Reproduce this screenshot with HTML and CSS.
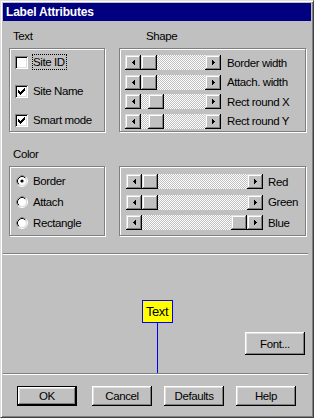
FILE: index.html
```html
<!DOCTYPE html>
<html>
<head>
  <title>Label Attributes</title>
  <link rel="stylesheet" href="styles.css">
</head>
<body>
  <div class="dialog">
    <div class="titlebar">Label Attributes</div>

    <div class="groups">
      <!-- Text options -->
      <div class="group">
        <div class="caption">Text</div>
        <div class="frame checks">
          <div class="check">
            <span class="box"></span>
            <span class="focus">Site ID</span>
          </div>
          <div class="check">
            <span class="box"><svg width="13" height="13" viewBox="0 0 13 13"><path d="M3 5H4V6H5V7H6V6H7V5H8V4H9V3H10V6H9V7H8V8H7V9H6V10H5V9H4V8H3Z" fill="#000" shape-rendering="crispEdges"/></svg></span>
            <span>Site Name</span>
          </div>
          <div class="check">
            <span class="box"><svg width="13" height="13" viewBox="0 0 13 13"><path d="M3 5H4V6H5V7H6V6H7V5H8V4H9V3H10V6H9V7H8V8H7V9H6V10H5V9H4V8H3Z" fill="#000" shape-rendering="crispEdges"/></svg></span>
            <span>Smart mode</span>
          </div>
        </div>
      </div>

      <!-- Shape sliders -->
      <div class="group">
        <div class="caption indent">Shape</div>
        <div class="frame sliders shape">
          <div class="slider">
            <div class="scroll">
              <span class="arrow"><svg width="3" height="5" viewBox="0 0 3 5"><path d="M0 2h1v1H0zM1 1h1v3H1zM2 0h1v5H2z" shape-rendering="crispEdges"/></svg></span>
              <span class="track"><span class="thumb" style="margin-left:0px"></span></span>
              <span class="arrow"><svg width="3" height="5" viewBox="0 0 3 5"><path d="M0 0h1v5H0zM1 1h1v3H1zM2 2h1v1H2z" shape-rendering="crispEdges"/></svg></span>
            </div>
            <span>Border width</span>
          </div>
          <div class="slider">
            <div class="scroll">
              <span class="arrow"><svg width="3" height="5" viewBox="0 0 3 5"><path d="M0 2h1v1H0zM1 1h1v3H1zM2 0h1v5H2z" shape-rendering="crispEdges"/></svg></span>
              <span class="track"><span class="thumb" style="margin-left:0px"></span></span>
              <span class="arrow"><svg width="3" height="5" viewBox="0 0 3 5"><path d="M0 0h1v5H0zM1 1h1v3H1zM2 2h1v1H2z" shape-rendering="crispEdges"/></svg></span>
            </div>
            <span>Attach. width</span>
          </div>
          <div class="slider">
            <div class="scroll">
              <span class="arrow"><svg width="3" height="5" viewBox="0 0 3 5"><path d="M0 2h1v1H0zM1 1h1v3H1zM2 0h1v5H2z" shape-rendering="crispEdges"/></svg></span>
              <span class="track"><span class="thumb" style="margin-left:7px"></span></span>
              <span class="arrow"><svg width="3" height="5" viewBox="0 0 3 5"><path d="M0 0h1v5H0zM1 1h1v3H1zM2 2h1v1H2z" shape-rendering="crispEdges"/></svg></span>
            </div>
            <span>Rect round X</span>
          </div>
          <div class="slider">
            <div class="scroll">
              <span class="arrow"><svg width="3" height="5" viewBox="0 0 3 5"><path d="M0 2h1v1H0zM1 1h1v3H1zM2 0h1v5H2z" shape-rendering="crispEdges"/></svg></span>
              <span class="track"><span class="thumb" style="margin-left:7px"></span></span>
              <span class="arrow"><svg width="3" height="5" viewBox="0 0 3 5"><path d="M0 0h1v5H0zM1 1h1v3H1zM2 2h1v1H2z" shape-rendering="crispEdges"/></svg></span>
            </div>
            <span>Rect round Y</span>
          </div>
        </div>
      </div>

      <!-- Color target -->
      <div class="group">
        <div class="caption">Color</div>
        <div class="frame radios">
          <div class="radio">
            <svg width="12" height="12" viewBox="0 0 12 12">
              <circle cx="6" cy="6" r="5.5" fill="none" stroke="#fff"/>
              <path d="M2.11 9.89A5.5 5.5 0 0 1 9.89 2.11" fill="none" stroke="#808080"/>
              <circle cx="6" cy="6" r="4.5" fill="#fff" stroke="#dfdfdf"/>
              <path d="M2.82 9.18A4.5 4.5 0 0 1 9.18 2.82" fill="none" stroke="#000"/>
              <circle cx="6" cy="6" r="1.6" fill="#000"/>
            </svg>
            <span>Border</span>
          </div>
          <div class="radio">
            <svg width="12" height="12" viewBox="0 0 12 12">
              <circle cx="6" cy="6" r="5.5" fill="none" stroke="#fff"/>
              <path d="M2.11 9.89A5.5 5.5 0 0 1 9.89 2.11" fill="none" stroke="#808080"/>
              <circle cx="6" cy="6" r="4.5" fill="#fff" stroke="#dfdfdf"/>
              <path d="M2.82 9.18A4.5 4.5 0 0 1 9.18 2.82" fill="none" stroke="#000"/>
            </svg>
            <span>Attach</span>
          </div>
          <div class="radio">
            <svg width="12" height="12" viewBox="0 0 12 12">
              <circle cx="6" cy="6" r="5.5" fill="none" stroke="#fff"/>
              <path d="M2.11 9.89A5.5 5.5 0 0 1 9.89 2.11" fill="none" stroke="#808080"/>
              <circle cx="6" cy="6" r="4.5" fill="#fff" stroke="#dfdfdf"/>
              <path d="M2.82 9.18A4.5 4.5 0 0 1 9.18 2.82" fill="none" stroke="#000"/>
            </svg>
            <span>Rectangle</span>
          </div>
        </div>
      </div>

      <!-- RGB sliders -->
      <div class="group">
        <div class="caption">&nbsp;</div>
        <div class="frame sliders colors">
          <div class="slider">
            <div class="scroll">
              <span class="arrow"><svg width="3" height="5" viewBox="0 0 3 5"><path d="M0 2h1v1H0zM1 1h1v3H1zM2 0h1v5H2z" shape-rendering="crispEdges"/></svg></span>
              <span class="track"><span class="thumb" style="margin-left:0px"></span></span>
              <span class="arrow"><svg width="3" height="5" viewBox="0 0 3 5"><path d="M0 0h1v5H0zM1 1h1v3H1zM2 2h1v1H2z" shape-rendering="crispEdges"/></svg></span>
            </div>
            <span>Red</span>
          </div>
          <div class="slider">
            <div class="scroll">
              <span class="arrow"><svg width="3" height="5" viewBox="0 0 3 5"><path d="M0 2h1v1H0zM1 1h1v3H1zM2 0h1v5H2z" shape-rendering="crispEdges"/></svg></span>
              <span class="track"><span class="thumb" style="margin-left:0px"></span></span>
              <span class="arrow"><svg width="3" height="5" viewBox="0 0 3 5"><path d="M0 0h1v5H0zM1 1h1v3H1zM2 2h1v1H2z" shape-rendering="crispEdges"/></svg></span>
            </div>
            <span>Green</span>
          </div>
          <div class="slider">
            <div class="scroll">
              <span class="arrow"><svg width="3" height="5" viewBox="0 0 3 5"><path d="M0 2h1v1H0zM1 1h1v3H1zM2 0h1v5H2z" shape-rendering="crispEdges"/></svg></span>
              <span class="track"><span class="thumb" style="margin-left:89px"></span></span>
              <span class="arrow"><svg width="3" height="5" viewBox="0 0 3 5"><path d="M0 0h1v5H0zM1 1h1v3H1zM2 2h1v1H2z" shape-rendering="crispEdges"/></svg></span>
            </div>
            <span>Blue</span>
          </div>
        </div>
      </div>
    </div>

    <div class="separator first"></div>

    <!-- Preview of the label -->
    <div class="preview">
      <div class="tag-column">
        <div class="tag">Text</div>
        <div class="leader"></div>
      </div>
      <button class="btn font-btn">Font...</button>
    </div>

    <div class="separator"></div>

    <div class="buttons">
      <button class="btn default">OK</button>
      <button class="btn">Cancel</button>
      <button class="btn">Defaults</button>
      <button class="btn">Help</button>
    </div>
  </div>
</body>
</html>
```

FILE: styles.css
```css
body {
  margin: 0;
  font-family: "Liberation Sans", Arial, sans-serif;
  font-size: 11.5px;
  letter-spacing: -0.4px;
  color: #000;
}
.dialog {
  width: 314px;
  height: 418px;
  box-sizing: border-box;
  padding: 2px;
  background: #c0c0c0;
  border: 1px solid;
  border-color: #dfdfdf #404040 #404040 #dfdfdf;
  box-shadow: inset 1px 1px #fff, inset -1px -1px #808080;
  display: flex;
  flex-direction: column;
}
.titlebar {
  height: 18px;
  line-height: 18px;
  padding-left: 3px;
  background: #000080;
  color: #fff;
  font-weight: bold;
  font-size: 12px;
  letter-spacing: -0.2px;
}
.groups {
  display: grid;
  grid-template-columns: 96px 187px;
  column-gap: 14px;
  row-gap: 16px;
  padding: 9px 0 0 6px;
}
.caption {
  height: 13px;
  line-height: 13px;
  margin-bottom: 5px;
  padding-left: 4px;
}
.caption.indent {
  padding-left: 27px;
}
.frame {
  box-sizing: border-box;
  border: 1px solid #808080;
  box-shadow: inset 1px 1px #fff, 1px 1px #fff;
  display: flex;
  flex-direction: column;
}
.checks {
  height: 84px;
  padding: 5px 0 0 5px;
  gap: 13px;
}
.check,
.radio {
  display: flex;
  align-items: center;
  height: 16px;
  gap: 5px;
}
.box {
  width: 13px;
  height: 13px;
  flex: none;
  background: #fff;
  box-shadow: inset 1px 1px #808080, inset -1px -1px #fff, inset 2px 2px #000, inset -2px -2px #dfdfdf;
}
.box svg {
  display: block;
}
.focus {
  border: 1px dotted #000;
  margin-left: -1px;
  padding-right: 1px;
  line-height: 14px;
}
.radios {
  height: 70px;
  padding: 6px 0 0 6px;
  gap: 5px;
}
.radio svg {
  flex: none;
}
.shape {
  height: 84px;
  padding: 6px 0 0 5px;
  gap: 4.5px;
}
.colors {
  height: 70px;
  padding: 7px 0 0 6px;
  gap: 5.5px;
}
.slider {
  display: flex;
  align-items: center;
  gap: 6px;
}
.colors .slider {
  gap: 5px;
}
.scroll {
  display: flex;
  width: 96px;
  height: 15px;
  flex: none;
}
.colors .scroll {
  width: 137px;
}
.arrow,
.thumb {
  width: 16px;
  flex: none;
  background: #c0c0c0;
  box-shadow: inset -1px -1px #000, inset 1px 1px #dfdfdf, inset -2px -2px #808080, inset 2px 2px #fff;
}
.arrow {
  display: flex;
  align-items: center;
  justify-content: center;
}
.arrow svg {
  display: block;
}
.track {
  flex: 1;
  display: flex;
  background: repeating-conic-gradient(#fff 0 25%, #c0c0c0 0 50%) 0 0 / 2px 2px;
}
.separator {
  border-top: 1px solid #808080;
  border-bottom: 1px solid #fff;
  margin-right: 3px;
}
.separator.first {
  margin-top: 17px;
}
.preview {
  height: 118px;
  display: grid;
  grid-template-columns: 1fr auto 1fr;
}
.tag-column {
  grid-column: 2;
  display: flex;
  flex-direction: column;
  align-items: center;
  padding-top: 45px;
}
.tag {
  width: 31px;
  height: 23px;
  box-sizing: border-box;
  border: 1px solid #0000ff;
  background: #ffff00;
  text-align: center;
  line-height: 21px;
  font-size: 13px;
}
.leader {
  width: 1px;
  flex: 1;
  background: #0000ff;
}
.btn {
  width: 60px;
  height: 20px;
  box-sizing: border-box;
  padding: 0;
  border: none;
  background: #c0c0c0;
  color: #000;
  font: inherit;
  letter-spacing: inherit;
  box-shadow: inset -1px -1px #000, inset 1px 1px #fff, inset -2px -2px #808080, inset 2px 2px #dfdfdf;
}
.font-btn {
  grid-column: 3;
  justify-self: end;
  align-self: end;
  height: 23px;
  margin: 0 6px 18px 0;
}
.buttons {
  display: flex;
  gap: 12px;
  padding-left: 14px;
  margin-top: 11px;
}
.btn.default {
  border: 1px solid #000;
  margin-right: 3px;
}
```
